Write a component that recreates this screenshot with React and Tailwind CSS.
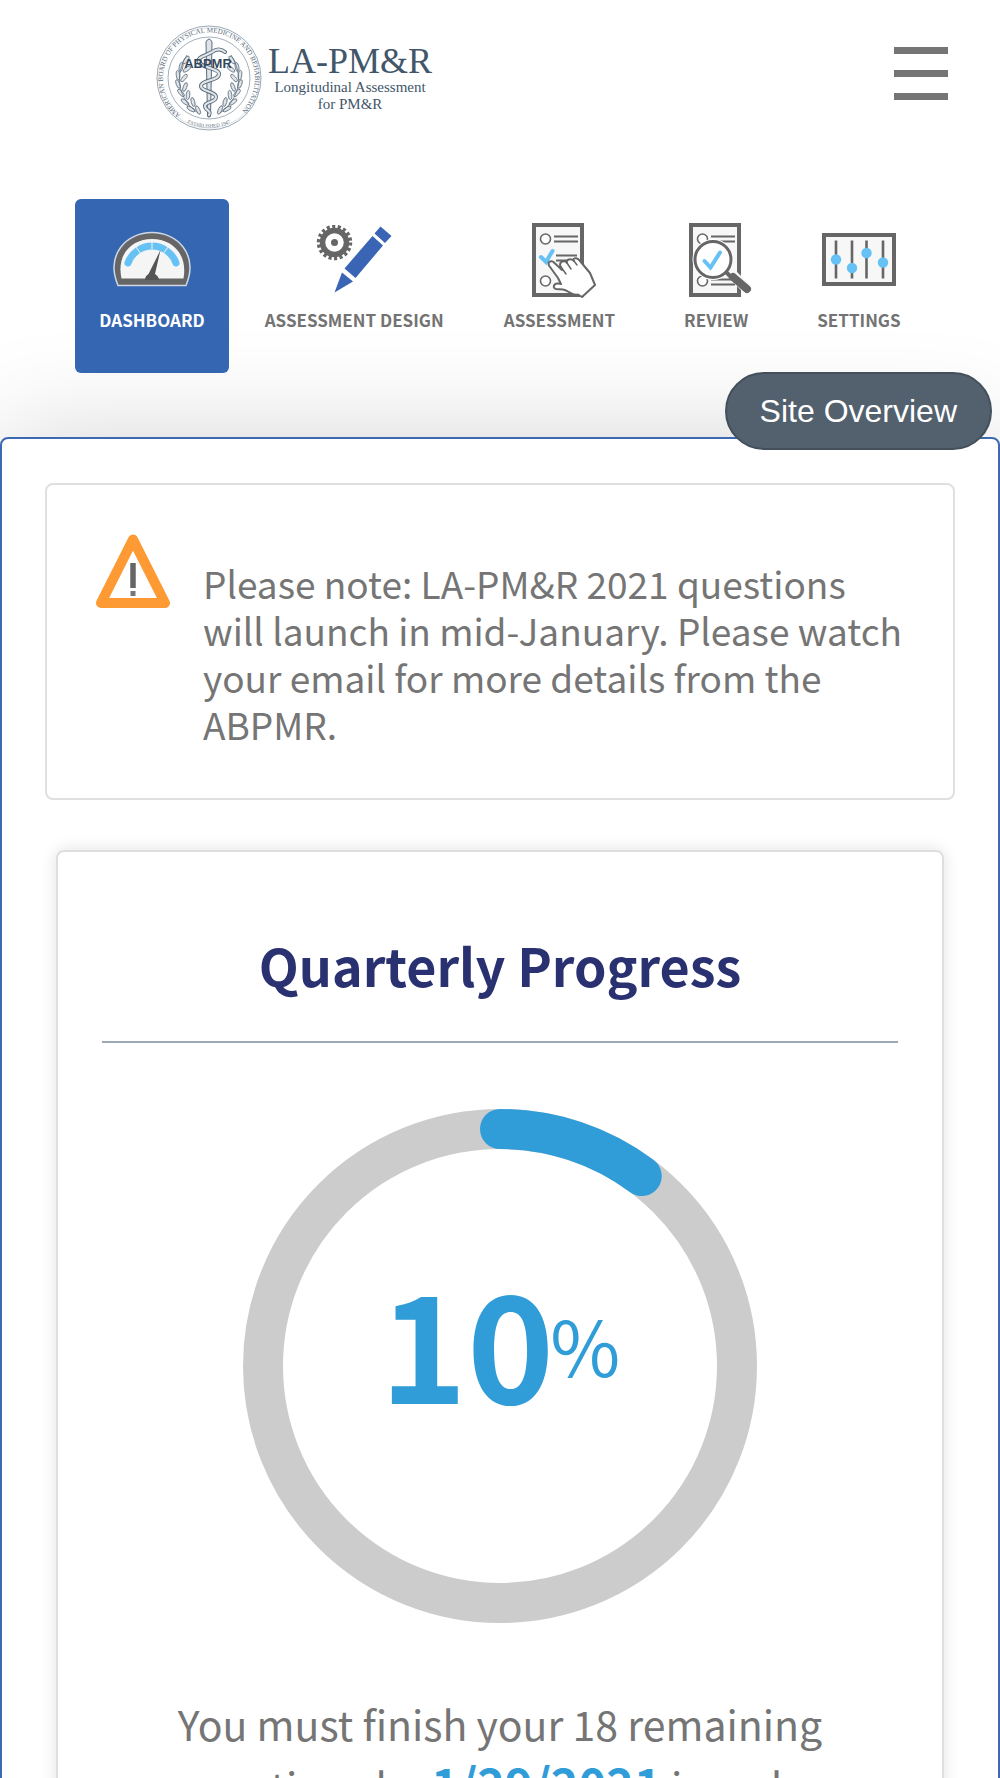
import React from "react";

const GREY = "#666666";
const SKY = "#66c1f5";

function Leaf({ x, y, r }) {
  return <ellipse cx={x} cy={y} rx="1.8" ry="4.6" transform={`rotate(${r} ${x} ${y})`} fill="#dfe4e9" stroke="#5c6c7b" strokeWidth="0.8" />;
}

const LEAVES = [
  [30, 35, 35], [25, 42, 10], [31, 44, 55], [22, 50, -5], [28, 53, 40], [22, 59, -20], [29, 62, 20],
  [25, 68, -40], [32, 70, 5], [29, 77, -55], [37, 77, -15], [35, 84, -60], [42, 85, -25],
];

function Seal() {
  return (
    <svg viewBox="0 0 106 106" className="size-[106px] shrink-0" role="img" aria-label="ABPMR seal">
      <defs>
        <path id="seal-top" d="M 25 90 A 46 46 0 1 1 81 90" />
        <path id="seal-bottom" d="M 31 97.5 A 50 50 0 0 0 75 97.5" />
      </defs>
      <circle cx="53" cy="53" r="52" fill="#fff" stroke="#9aa7b3" strokeWidth="1" />
      <circle cx="53" cy="53" r="50.2" fill="none" stroke="#c5ccd3" strokeWidth="0.6" />
      <circle cx="53" cy="53" r="41" fill="none" stroke="#9aa7b3" strokeWidth="0.9" />
      <text className="font-['Liberation_Serif',serif] text-[7px]" fill="#5c6c7b">
        <textPath href="#seal-top" startOffset="0">AMERICAN BOARD OF PHYSICAL MEDICINE AND REHABILITATION</textPath>
      </text>
      <text className="font-['Liberation_Serif',serif] text-[5px]" fill="#5c6c7b">
        <textPath href="#seal-bottom" startOffset="50%" textAnchor="middle">ESTABLISHED 1947</textPath>
      </text>
      {LEAVES.map(([x, y, r]) => <Leaf key={`l${x}-${y}`} x={x} y={y} r={r} />)}
      {LEAVES.map(([x, y, r]) => <Leaf key={`r${x}-${y}`} x={106 - x} y={y} r={-r} />)}
      <path d="M31 30C18 50 22 74 42 88M75 30C88 50 84 74 64 88" fill="none" stroke="#5c6c7b" strokeWidth="0.8" />
      <path d="M50 17q3-6 6 0l-1.5 74q-1.5 3-3 0z" fill="#dfe4e9" stroke="#5c6c7b" strokeWidth="1" />
      <path d="M69 27c-5-4-9-3-13 0-7 4-15 5-13 10 2 6 20 6 20 12 0 7-18 6-18 12s15 5 15 11-11 4-11 9 7 4 4 9" fill="none" stroke="#5c6c7b" strokeWidth="4" strokeLinecap="round" />
      <path d="M69 27c-5-4-9-3-13 0-7 4-15 5-13 10 2 6 20 6 20 12 0 7-18 6-18 12s15 5 15 11-11 4-11 9 7 4 4 9" fill="none" stroke="#dfe4e9" strokeWidth="2.2" strokeLinecap="round" />
      <text x="52" y="43" textAnchor="middle" className="font-['Liberation_Sans',sans-serif] text-[13px] font-bold" fill="#33475b">ABPMR</text>
    </svg>
  );
}

function GaugeIcon() {
  return (
    <svg viewBox="0 0 78 56" className="h-14 w-[78px]" aria-hidden="true">
      <path d="M5 54.500C-8 23 14 1.500 39 1.500S86 23 73 54.500Z" fill={GREY} stroke="#cfd8e4" strokeWidth="1.500" />
      <path d="M8.500 47.500C3 22 20 8 39 8s36 14 31.500 39.500Z" fill="#f5f5f5" />
      <path d="M15 32A25.500 25.500 0 0 1 63 32" fill="none" stroke={SKY} strokeWidth="7" strokeLinecap="round" />
      <path d="M39 9v9M22.500 15.500l5.500 7.500M55.500 15.500l-5.500 7.500" stroke="#f5f5f5" strokeWidth="1" />
      <path d="M47.500 19L35.500 43Q32 45 32 49H46Q45.500 45 42 43Z" fill="#555" />
    </svg>
  );
}

function DesignIcon() {
  return (
    <svg viewBox="0 0 76 68" className="h-[68px] w-[76px]" aria-hidden="true">
      <circle cx="18.500" cy="17.500" r="15.500" fill="none" stroke={GREY} strokeWidth="4.500" strokeDasharray="3 2.410" />
      <circle cx="18.500" cy="17.500" r="12" fill="none" stroke={GREY} strokeWidth="5.500" />
      <circle cx="18.500" cy="17.500" r="3.500" fill={GREY} />
      <path d="M64.500 1.500L75.500 11 69 18 58.500 8.500ZM56.500 11L67 20.500 39.500 53 28.500 43.500ZM26 47.500L37 56.500 18.500 67.500Z" fill="#3a64b4" />
    </svg>
  );
}

function Sheet({ children }) {
  return (
    <svg viewBox="-10 -3 74 78" className="h-[78px] w-[74px]" aria-hidden="true">
      <rect x="2" y="2" width="48" height="70" fill="#f7f7f7" stroke={GREY} strokeWidth="4" />
      <circle cx="13.500" cy="16" r="5" fill="#fff" stroke={GREY} strokeWidth="1.600" />
      <circle cx="13.500" cy="58" r="5" fill="#fff" stroke={GREY} strokeWidth="1.600" />
      <path d="M22 13.500h24M22 18.500h24" stroke={GREY} strokeWidth="2" />
      {children}
    </svg>
  );
}

function AssessmentIcon() {
  return (
    <Sheet>
      <path d="M24 32.500h21M24 37.500h20" stroke={GREY} strokeWidth="2" />
      <path d="M9 34l5 5 6.500-11" fill="none" stroke={SKY} strokeWidth="4" strokeLinecap="round" />
      <path d="M17 42.500C15 38 20 37 22.500 40L30 47 28 42C28 38 33 37 35 40L34.500 39C36 35 40 36 42 38L41 37C42 34 46 35 48 38L58 50 63 62 50 74 46 71.500C40 73 36 67 31 66.500L24 66C20 65 22 60 26 60.500L29 61 26 55Z" fill="#fff" stroke={GREY} strokeWidth="2" strokeLinejoin="round" />
      <path d="M29 44l5 7M35 40l4 6M42 38l3 4" fill="none" stroke={GREY} strokeWidth="1.500" strokeLinecap="round" />
    </Sheet>
  );
}

function ReviewIcon() {
  return (
    <Sheet>
      <path d="M22 56.500h24M22 61.500h24" stroke={GREY} strokeWidth="2" />
      <path d="M40 48L58 66" stroke="#f7f7f7" strokeWidth="10" />
      <circle cx="24" cy="36.500" r="20.500" fill="#fff" />
      <circle cx="24" cy="36.500" r="18" fill="#fff" stroke={GREY} strokeWidth="3" />
      <path d="M37 49l6 6" stroke={GREY} strokeWidth="4" />
      <path d="M44 54L58 66" stroke={GREY} strokeWidth="8" strokeLinecap="round" />
      <path d="M15.500 38l6 6.500L31 29.500" fill="none" stroke={SKY} strokeWidth="4" strokeLinecap="round" />
    </Sheet>
  );
}

function SettingsIcon() {
  return (
    <svg viewBox="0 0 74 53" className="h-[53px] w-[74px]" aria-hidden="true">
      <rect x="2" y="2" width="70" height="49" fill="#f7f7f7" stroke={GREY} strokeWidth="4" />
      <path d="M14 7.500v38M30 7.500v38M44.500 7.500v38M61 7.500v38" stroke={GREY} strokeWidth="2.600" />
      <g fill={SKY}>
        <circle cx="14" cy="26.500" r="5.200" />
        <circle cx="30" cy="35" r="5.200" />
        <circle cx="44.500" cy="20" r="5.200" />
        <circle cx="61" cy="29.500" r="5.200" />
      </g>
    </svg>
  );
}

const NAV = [
  { label: "DASHBOARD", Icon: GaugeIcon, look: "bg-[#3566b1] px-6 text-white" },
  { label: "ASSESSMENT DESIGN", Icon: DesignIcon, look: "px-6 text-[#737373]" },
  { label: "ASSESSMENT", Icon: AssessmentIcon, look: "px-6 text-[#737373]" },
  { label: "REVIEW", Icon: ReviewIcon, look: "px-7 text-[#737373]" },
  { label: "SETTINGS", Icon: SettingsIcon, look: "px-6 text-[#737373]" },
];

function ProgressRing({ percent }) {
  return (
    <div className="relative mx-auto mt-[66px] size-[514px]">
      <svg viewBox="0 0 514 514" className="size-full" aria-hidden="true">
        <circle cx="257" cy="257" r="237" fill="none" stroke="#cccccc" strokeWidth="40" />
        <circle cx="257" cy="257" r="237" fill="none" stroke="#309dd9" strokeWidth="40" strokeLinecap="round" pathLength="98" strokeDasharray={`${percent} 100`} transform="rotate(-90 257 257)" />
      </svg>
      <p className="absolute inset-0 flex items-start justify-center pt-[157px] text-[#309dd9]">
        <span className="text-[148px] leading-[148px] font-bold">{percent}</span>
        <span className="-ml-1 pt-10 text-[76px] leading-[76px] font-normal">%</span>
      </p>
    </div>
  );
}

export default function App() {
  return (
    <div className="h-screen overflow-hidden bg-white font-['Noto_Sans_CJK_SC',sans-serif] text-[#757575]">
      <header className="flex items-start justify-between pt-[25px] pr-[52px] pl-[156px]">
        <a href="#home" className="flex items-start gap-1.5 text-[#42566a]">
          <Seal />
          <span className="flex flex-col items-center pt-[18px] font-['Liberation_Serif',serif]">
            <span className="text-4xl leading-9">LA-PM&amp;R</span>
            <span className="text-[15px] leading-[17px]">Longitudinal Assessment</span>
            <span className="text-[15px] leading-[17px]">for PM&amp;R</span>
          </span>
        </a>
        <button type="button" aria-label="Open menu" className="mt-[22px] flex w-[54px] flex-col gap-4">
          <span className="h-[7px] bg-[#757575]" />
          <span className="h-[7px] bg-[#757575]" />
          <span className="h-[7px] bg-[#757575]" />
        </button>
      </header>

      <nav className="mt-[68px] flex justify-center gap-3">
        {NAV.map(({ label, Icon, look }) => (
          <a key={label} href={`#${label.toLowerCase().replace(" ", "-")}`} className={`relative z-10 flex h-[174px] flex-col items-center rounded-md pt-[21px] ${look}`}>
            <span className="flex h-[78px] items-center justify-center"><Icon /></span>
            <span className="mt-2.5 text-[17px] leading-6 font-bold whitespace-nowrap">{label}</span>
          </a>
        ))}
      </nav>

      <main className="relative mt-16 rounded-lg border-2 border-[#3d68b2] bg-white px-[43px] pt-11 pb-11 shadow-[0_0_110px_rgba(0,0,0,0.17)]">
        <button type="button" className="absolute -top-[67px] right-1.5 z-20 h-[78px] rounded-full border-2 border-[#43505b] bg-[#52616d] px-[33px] font-['Liberation_Sans',sans-serif] text-[32px] text-white">
          Site Overview
        </button>

        <section className="flex items-start rounded-lg border-2 border-[#e0e0e0] px-12 pt-12 pb-[50px]">
          <svg viewBox="0 0 76 76" className="size-[76px] shrink-0" role="img" aria-label="Warning">
            <path d="M38 6.500L70 70H6Z" fill="#fff" stroke="#fd9a34" strokeWidth="10" strokeLinejoin="round" />
            <path d="M38 30v25" stroke="#666" strokeWidth="5.500" />
            <path d="M38 58v5" stroke="#777" strokeWidth="5" />
          </svg>
          <p className="ml-8 pt-[27px] text-[37px] leading-[47px]">
            Please note: LA-PM&amp;R 2021 questions will launch in mid-January. Please watch your email for more details from the ABPMR.
          </p>
        </section>

        <section className="mx-[11px] mt-[50px] rounded-lg border-2 border-[#dedede] px-11 pt-[82px] pb-16 shadow-[0_0_16px_rgba(0,0,0,0.12)]">
          <h1 className="border-b-2 border-[#9ba8b5] pb-[45px] text-center text-[52px] leading-[62px] font-bold text-[#2a3170]">Quarterly Progress</h1>
          <ProgressRing percent={10} />
          <p className="mx-auto mt-[70px] max-w-[720px] text-center text-[41px] leading-[60px]">
            You must finish your 18 remaining questions by <strong className="text-[47px] text-[#309dd9]">1/29/2021</strong> in order
          </p>
        </section>
      </main>
    </div>
  );
}
